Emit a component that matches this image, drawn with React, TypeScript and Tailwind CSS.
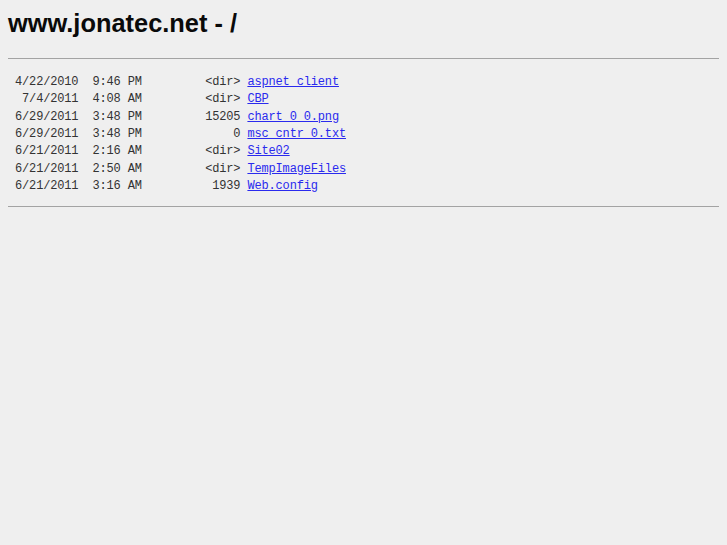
const entries = [
  { date: "4/22/2010", time: "9:46 PM", size: "<dir>", name: "aspnet_client" },
  { date: "7/4/2011", time: "4:08 AM", size: "<dir>", name: "CBP" },
  { date: "6/29/2011", time: "3:48 PM", size: "15205", name: "chart_0_0.png" },
  { date: "6/29/2011", time: "3:48 PM", size: "0", name: "msc_cntr_0.txt" },
  { date: "6/21/2011", time: "2:16 AM", size: "<dir>", name: "Site02" },
  { date: "6/21/2011", time: "2:50 AM", size: "<dir>", name: "TempImageFiles" },
  { date: "6/21/2011", time: "3:16 AM", size: "1939", name: "Web.config" },
];

export default function App() {
  return (
    <div className="min-h-screen bg-[#efefef] px-2 pt-[9px] text-black">
      <h1 className="font-['Liberation_Sans',Arial,sans-serif] text-[25.4px] font-bold leading-[29px] text-[#0a0a0a]">
        www.jonatec.net - /
      </h1>

      <hr className="mt-5 border-0 border-t border-[#a3a3a3]" />

      <pre className="mt-[15px] mb-[11px] font-['Liberation_Mono','Courier_New',monospace] text-[12px] leading-[17.33px] tracking-[-0.16px] text-[#333]">
        {entries.map((e) => (
          <div key={e.name}>
            {e.date.padStart(10) + " " + e.time.padStart(8) + " " + e.size.padStart(13) + " "}
            <a href="#" className="text-[#2a2aee] underline">
              {e.name}
            </a>
          </div>
        ))}
      </pre>

      <hr className="border-0 border-t border-[#a3a3a3]" />
    </div>
  );
}
